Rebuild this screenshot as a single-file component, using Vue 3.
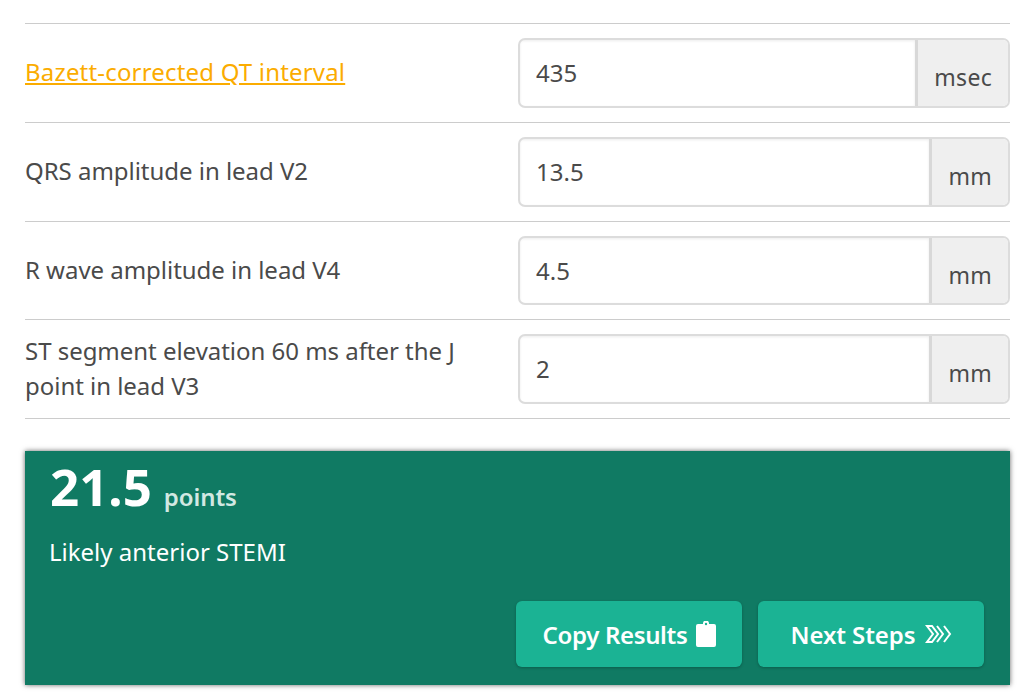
<script setup>
const rows = [
  { label: 'Bazett-corrected QT interval', link: true, value: '435', unit: 'msec' },
  { label: 'QRS amplitude in lead V2', value: '13.5', unit: 'mm' },
  { label: 'R wave amplitude in lead V4', value: '4.5', unit: 'mm' },
  { label: 'ST segment elevation 60 ms after the J point in lead V3', value: '2', unit: 'mm' },
]
</script>

<template>
  <div class="page">
    <div class="rows">
      <div v-for="r in rows" :key="r.label" class="row">
        <div class="label">
          <a v-if="r.link" class="link" href="#">{{ r.label }}</a>
          <template v-else>{{ r.label }}</template>
        </div>
        <div class="field">
          <div class="value">{{ r.value }}</div>
          <div class="unit">{{ r.unit }}</div>
        </div>
      </div>
    </div>
    <div class="result">
      <div class="score"><span class="num">21.5</span><span class="pts">points</span></div>
      <div class="desc">Likely anterior STEMI</div>
      <div class="actions">
        <button class="btn copy"><span class="copy-text">Copy Results</span>
          <svg width="22" height="26" viewBox="0 0 22 26"><path fill="#fff" d="M3 3h5V2.5a3 3 0 0 1 6 0V3h5a2 2 0 0 1 2 2v19a2 2 0 0 1-2 2H3a2 2 0 0 1-2-2V5a2 2 0 0 1 2-2Z"/><circle cx="11" cy="3" r="1.2" fill="#1bb394"/></svg>
        </button>
        <button class="btn next">Next Steps
          <svg width="28" height="20" viewBox="0 0 28 20" fill="none" stroke="#fff" stroke-width="2"><path d="M2 2h5l6 8-6 8H2l6-8Z"/><path d="M12 2l6 8-6 8"/><path d="M19 2l6 8-6 8"/></svg>
        </button>
      </div>
    </div>
  </div>
</template>

<style scoped>
.page {
  height: 698px;
  box-sizing: border-box;
  padding: 23px 14px 0 25px;
  font-family: "Noto Sans", "Open Sans", sans-serif;
  color: #4a4a4a;
  overflow: hidden;
}
.rows { border-bottom: 1px solid #ccc; }
.row {
  display: flex;
  align-items: center;
  justify-content: space-between;
  border-top: 1px solid #ccc;
  padding: 14px 0;
}
.label { width: 450px; font-size: 24px; line-height: 35px; margin-top: -2px; letter-spacing: -0.03px; }
.link { color: #fbac00; text-decoration: underline; letter-spacing: 0.18px; }
.field {
  width: 492px;
  height: 69.75px;
  box-sizing: border-box;
  display: flex;
  border: 2px solid #dcdcdc;
  border-radius: 7px;
  overflow: hidden;
}
.value {
  flex: 1;
  padding: 0 16px;
  font-size: 24px;
  line-height: 65px;
  box-shadow: inset 0 1px 3px rgba(0,0,0,0.08);
}
.unit {
  background: #efefef;
  border-left: 3px solid #d8d8d8;
  padding: 10px 16px 0;
  font-size: 23px;
  letter-spacing: 0.3px;
  line-height: 54px;
}
.result {
  margin-top: 32px;
  height: 234px;
  box-sizing: border-box;
  background: #107a63;
  box-shadow: 0 0 5px rgba(0,0,0,0.6);
  padding: 0 26px 0 25px;
  color: #fff;
  display: flex;
  flex-direction: column;
}
.score { display: flex; align-items: baseline; height: 72px; }
.num { font-size: 51px; font-weight: 700; line-height: 71px; }
.pts { font-size: 24px; font-weight: 600; margin-left: 12px; letter-spacing: -0.1px; color: #d2e8e2; }
.desc { font-size: 24px; line-height: 34px; margin: 12px 0 0 -1px; }
.actions { display: flex; justify-content: flex-end; gap: 16px; margin-top: 32px; }
.btn {
  height: 66px;
  width: 226px;
  border: 0;
  border-radius: 6px;
  background: #1bb394;
  color: #fff;
  font: 600 24px "Noto Sans", "Open Sans", sans-serif;
  letter-spacing: -0.1px;
  display: flex;
  align-items: center;
  justify-content: center;
  gap: 8px;
  box-shadow: 0 1px 3px rgba(0,0,0,0.25);
}
.copy { padding: 0 0 0 2px; }
.next { padding: 0 0 0 2px; gap: 10px; }
.copy-text { letter-spacing: -0.35px; }
</style>
